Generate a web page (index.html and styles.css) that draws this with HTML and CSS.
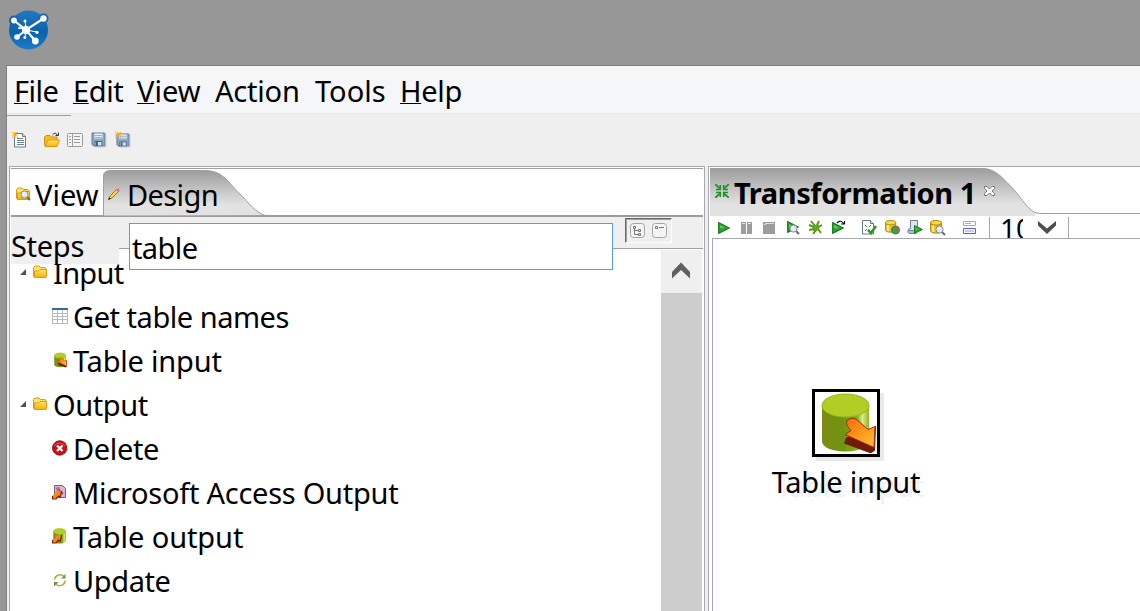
FILE: index.html
```html
<!DOCTYPE html>
<html lang="en">
<head>
<meta charset="utf-8">
<title>Transformation 1</title>
<link rel="stylesheet" href="styles.css">
</head>
<body>
<svg class="defs" aria-hidden="true">
  <defs>
    <linearGradient id="tab" x1="0" y1="0" x2="0" y2="1"><stop offset="0" stop-color="#9c9c9c"/><stop offset=".5" stop-color="#cccccc"/><stop offset=".75" stop-color="#e2e2e2"/><stop offset="1" stop-color="#e2e2e2"/></linearGradient>
    <linearGradient id="gold" x1="0" y1="0" x2="0" y2="1"><stop offset="0" stop-color="#ffe36b"/><stop offset="1" stop-color="#f8ae0c"/></linearGradient>
    <linearGradient id="blue" x1="0" y1="0" x2="0" y2="1"><stop offset="0" stop-color="#2478bf"/><stop offset=".55" stop-color="#0862ae"/><stop offset="1" stop-color="#1c7ccb"/></linearGradient>
    <linearGradient id="green" x1="0" y1="0" x2="1" y2="0"><stop offset="0" stop-color="#7d8b14"/><stop offset=".45" stop-color="#6f9510"/><stop offset=".75" stop-color="#86ad18"/><stop offset=".86" stop-color="#d8ec8c"/><stop offset="1" stop-color="#8fb51d"/></linearGradient>
    <linearGradient id="orange" x1="0" y1="0" x2="1" y2="1"><stop offset="0" stop-color="#f46a0a"/><stop offset=".55" stop-color="#ff9a1c"/><stop offset="1" stop-color="#ffc24a"/></linearGradient>
    <symbol id="folder" viewBox="0 0 16 14"><path d="M1.500 11V2.500L3 1h4l1.500 1.500H13L14 4v8.500H2.500z" fill="#ffe36b" stroke="#d59a1c"/><path d="M2.500 12.500V6h4L8 4.500h6.500v7l-1 1z" fill="url(#gold)" stroke="#e09c10"/></symbol>
    <symbol id="play" viewBox="0 0 12 12"><path d="M.7.7v10.600L11.300 6z" fill="#2da52d" stroke="#137a1b" stroke-width="1.200"/><path d="M2 3v3h5z" fill="#65c95f"/></symbol>
    <symbol id="floppy" viewBox="0 0 16 16"><path d="M1 1h12.500l.5.500V14H2.500L1 12.500z" fill="#8ba7c0" stroke="#607b94"/><path d="M3.500 1.500h8v5h-8z" fill="#e4edf4"/><path d="M4 3.500h7M4 5.500h7" stroke="#9db2c4"/><path d="M4 9.500h7V14H4z" fill="#d8e0e8" stroke="#4f6577"/><path d="M5 10h2v4H5z" fill="#4d6375"/><path d="M15 3v12H4" fill="none" stroke="#bfd2e4"/></symbol>
    <symbol id="spark" viewBox="0 0 7 7"><path d="M2 2h3v3H2z" fill="#ffae00"/><path d="M0 0h1.500v1.500H0zM2.800 0h1.400v2H2.800zM5.500 0H7v1.500H5.500zM0 2.800h2v1.400H0zM5 2.800h2v1.400H5zM0 5.500h1.500V7H0zM2.800 5h1.400v2H2.800zM5.500 5.500H7V7H5.500z" fill="#f8b21c"/></symbol>
    <symbol id="lens" viewBox="0 0 11 11"><path d="M7 7l3 3" stroke="#6a6a6a" stroke-width="2"/><circle cx="4.500" cy="4.500" r="3.600" fill="#dcebf7" stroke="#888"/><path d="M2.800 4.500q0-1.500 1.700-1.700" fill="none" stroke="#fff"/></symbol>
    <symbol id="doc" viewBox="0 0 13 15"><path d="M.5.5h8l3 3v10.500H.5z" fill="#fff" stroke="#647c91"/><path d="M8.500.5v3h3" fill="#d8e2ea" stroke="#647c91"/></symbol>
    <symbol id="db" viewBox="0 0 14 15"><path d="M.5 3v8.500c0 3.500 12 3.500 12 0V3" fill="#e9c52b" stroke="#a87c0a"/><path d="M3.500 5v8" stroke="#fff08b" stroke-width="2"/><ellipse cx="6.500" cy="3" rx="6" ry="2.500" fill="#f5dc3d" stroke="#a87c0a"/></symbol>
    <symbol id="dbgreen" viewBox="0 0 60 60"><path d="M5 12v36c0 14 47 14 47 0V12" fill="url(#green)"/><ellipse cx="28.500" cy="12.500" rx="23.500" ry="11.500" fill="#b2cd24" stroke="#98b619"/></symbol>
    <symbol id="arrow" viewBox="0 0 32 36"><path d="M2 20L0 26l27 10 4-3 1-25-7 7z" fill="#721a09"/><path d="M3 3q6-5 12 1l9 8 7-3-1 21L1 17l6-4-4-5q-1-3 0-5z" fill="url(#orange)" stroke="#a32909"/></symbol>
  </defs>
</svg>

<header class="titlebar">
  <svg class="logo" width="42" height="42" viewBox="0 0 42 42"><circle cx="21.500" cy="21" r="19.500" fill="url(#blue)"/><circle cx="7" cy="11.500" r="5" fill="#1266ad"/><circle cx="36.500" cy="9.500" r="5" fill="#1266ad"/><path d="M7 11.500L19 21 36.500 9.500M19 21l9 10.500M19 21l-9 7" stroke="#fff" stroke-width="2.200" fill="none"/><path d="M19 21l-.8-9.300M19 21l11 2M19 21l-1 7M19 21l-6-2" stroke="#fff" fill="none"/><g fill="#fff"><circle cx="7" cy="11.500" r="2.900"/><circle cx="36.500" cy="9.500" r="3.200"/><circle cx="28.300" cy="32" r="3.400"/><circle cx="10" cy="28" r="2.800"/><circle cx="19" cy="21" r="4.200"/><circle cx="18" cy="12" r="1.500"/><circle cx="30" cy="23.300" r="1.600"/><circle cx="17.800" cy="28.500" r="1.500"/><circle cx="12.500" cy="19" r="1.300"/></g></svg>
</header>

<main class="window">
  <nav class="menu"><span class="m1"><u>F</u>ile</span><span class="m2"><u>E</u>dit</span><span class="m3"><u>V</u>iew</span><span class="m4">Action</span><span class="m5">Tools</span><span class="m6"><u>H</u>elp</span></nav>
  <div class="toolbar">
    <svg width="16" height="16" viewBox="0 0 16 16"><use href="#doc" x="2" y="1" width="13" height="15"/><path d="M5 6.500h6M5 8.500h7M5 10.500h7M5 12.500h7" stroke="#6c8296"/><use href="#spark" width="6" height="6"/></svg>
    <svg class="gap" width="18" height="16" viewBox="0 0 18 16"><path d="M1.500 13V5L3 3.500h4L8.500 5H14v9H2.500z" fill="#f5bd23" stroke="#cc9012"/><path d="M2 14.500L5 8h11.500L14 14.500z" fill="url(#gold)" stroke="#dc9a13"/><path d="M9.500 3q3-4 5.500 1M12.500 3.500h3v-3" fill="none" stroke="#333"/></svg>
    <svg width="16" height="16" viewBox="0 0 16 16"><rect x=".5" y="1.500" width="15" height="13" rx="1" fill="#f4f4f4" stroke="#9b9b9b"/><path d="M5.500 2v12M2 4.500h2M2 7.500h2M2 10.500h2M7 4.500h6M7 7.500h6M7 10.500h6" stroke="#9b9b9b"/></svg>
    <svg width="16" height="16"><use href="#floppy" width="16" height="16"/></svg>
    <svg width="16" height="16" viewBox="0 0 16 16"><use href="#floppy" x="1" y="1" width="15" height="15"/><use href="#spark" width="6" height="6"/></svg>
  </div>

  <div class="panels">
    <section class="left">
      <div class="tabs">
        <svg class="tabshape" width="692" height="49" viewBox="0 0 692 49"><path d="M92.500 48V8q0-5 6-5.500h96c17 0 23 12 32 21 13 13 18 21 28 24z" fill="url(#tab)" stroke="#a0a0a0"/><path d="M0 47.500h92M253 47.500h439" stroke="#9c9c9c" stroke-width="1"/><path d="M0 48.500h692" stroke="#9c9c9c" stroke-width="1"/></svg>
        <div class="tab view"><svg width="16" height="14" viewBox="0 0 16 14"><use href="#folder" width="16" height="14"/><use href="#lens" x="5" y="3" width="11" height="11"/></svg><span>View</span></div>
        <div class="tab design"><svg width="13" height="13" viewBox="0 0 13 13"><path d="M2 9l7-7 2 2-7 7-3 1z" fill="#ffd246" stroke="#ad7415"/><path d="M8 3l2-2 2 2-2 2z" fill="#d97983"/><path d="M0 13l1-3 2 2z" fill="#333"/></svg><span>Design</span></div>
      </div>
      <div class="body">
        <div class="filter">
          <span class="steps">Steps</span>
          <input class="search" type="text" value="table">
          <div class="toggles">
            <svg width="15" height="15" viewBox="0 0 15 15"><rect x=".5" y=".5" width="14" height="14" rx="3" fill="#f5f5f5" stroke="#a3a3a3"/><path d="M4.500 5v6.500H8M4.500 7.500H8" fill="none" stroke="#777"/><path d="M3.500 3.500h2v2h-2zM8.500 6.500h2v2h-2zM8.500 10.500h2v2h-2z" fill="#eee" stroke="#777"/></svg>
            <svg width="15" height="15" viewBox="0 0 15 15"><rect x=".5" y=".5" width="14" height="14" rx="3" fill="#f5f5f5" stroke="#a3a3a3"/><path d="M3.500 3.500h2v2h-2zM7 4.500h5" fill="none" stroke="#777"/></svg>
          </div>
        </div>
        <div class="treewrap">
          <ul class="tree">
            <li class="group"><i class="tri"></i><svg width="16" height="14"><use href="#folder" width="16" height="14"/></svg><span class="t-input">Input</span></li>
            <li class="leaf"><svg width="16" height="17" viewBox="0 0 16 17"><path d="M0 1h16v15H0z" fill="#fff"/><path d="M.5 2v14M5.500 2v14M10.500 2v14M15.500 2v14M0 5.500h16M0 8.500h16M0 11.500h16M0 15.500h16" stroke="#b4bac4"/><path d="M0 1h16" stroke="#3a62b4" stroke-width="2"/></svg><span class="t-get">Get table names</span></li>
            <li class="leaf"><svg width="16" height="17" viewBox="0 0 16 17"><use href="#dbgreen" x="1" y="0" width="15" height="16"/><use href="#arrow" x="6" y="5" width="9" height="11"/></svg><span class="t-tin">Table input</span></li>
            <li class="group"><i class="tri"></i><svg width="16" height="14"><use href="#folder" width="16" height="14"/></svg><span class="t-out">Output</span></li>
            <li class="leaf"><svg width="16" height="17" viewBox="0 0 16 17"><circle cx="7.700" cy="8" r="7.200" fill="#c90f17" stroke="#94141a"/><path d="M2 6q5-6 11.500 0" fill="none" stroke="#e05b5e"/><path d="M5 5.500l5.500 5.500M10.500 5.500L5 11" stroke="#fff" stroke-width="2.200"/></svg><span class="t-del">Delete</span></li>
            <li class="leaf"><svg width="16" height="17" viewBox="0 0 16 17"><path d="M2.500 1.500h8l3 3v9h-11z" fill="#d8b8c4" stroke="#77626d"/><circle cx="6" cy="5" r="2" fill="#b16a86"/><path d="M7 6l4 4" stroke="#9b4e71" stroke-width="2"/><path d="M.5 11.500L4 9.500 3 7.500l6.500-.5-1.500 6-2-1.500-2 3-3.500.5z" fill="#f8871b"/><path d="M.5 12v3h3.500l2.500-3 1.700 1.200L9.700 7" fill="none" stroke="#812109" stroke-width="1.200"/></svg><span class="t-ms">Microsoft Access Output</span></li>
            <li class="leaf"><svg width="16" height="17" viewBox="0 0 16 17"><use href="#dbgreen" x="0" y="0" width="16" height="16"/><path d="M.5 11.500L4 9.500 3 7.500l6.500-.5-1.500 6-2-1.500-2 3-3.500.5z" fill="#f8871b"/><path d="M.5 12v3h3.500l2.500-3 1.700 1.200L9.700 7" fill="none" stroke="#812109" stroke-width="1.200"/></svg><span class="t-tout">Table output</span></li>
            <li class="leaf"><svg width="16" height="17" viewBox="0 0 16 17"><path d="M2.500 7.500a5.500 5 0 0 1 9.500-3M13 8.500a5.500 5 0 0 1-9 4" fill="none" stroke="#9fb83c" stroke-width="1.500"/><path d="M13.500 2v4.500H9zM2 14.500V10h4.500z" fill="#7e8c3c"/></svg><span class="t-up">Update</span></li>
          </ul>
          <div class="scroll"><div class="up"><svg width="18" height="17" viewBox="0 0 18 17"><path d="M0 10L9 .5l9 9.500v6.500L9 8 0 16.500z" fill="#606060"/></svg></div></div>
        </div>
      </div>
    </section>

    <section class="right">
      <div class="tabs">
        <svg class="tabshape" width="432" height="49" viewBox="0 0 432 49"><path d="M0 48V.5h273c12 0 19 9 28 18 13 13 16 24 27 27V48z" fill="url(#tab)"/><path d="M0 .5h273c12 0 19 9 27 17 14 14 18 28 31 28h101" fill="none" stroke="#a0a0a0"/><path d="M325 46h107v3H325z" fill="#fff"/></svg>
        <div class="tab trans"><svg width="14" height="14" viewBox="0 0 14 14"><path d="M0 0l5 4.500M14 0L9 4.500M0 14l5-4.500M14 14L9 9.500" stroke="#249024" stroke-width="1.700"/><path d="M5.300 1v4.500H1M8.700 1v4.500H13M5.300 13V8.500H1M8.700 13V8.500H13" fill="none" stroke="#249024" stroke-width="1.600"/></svg><span>Transformation 1</span><svg class="close" width="11" height="10" viewBox="0 0 11 10"><path d="M.5.5h2.500L5.500 3 8 .5h2.500v2L8 5l2.500 2.500v2H8L5.500 7 3 9.500H.5v-2L3 5 .5 2.500z" fill="#fff" stroke="#777"/></svg></div>
      </div>
      <div class="actions">
        <svg class="a1" width="12" height="12"><use href="#play" width="12" height="12"/></svg>
        <svg class="a2" width="11" height="12" viewBox="0 0 11 12"><path d="M0 0h5v12H0zM6 0h5v12H6z" fill="#9d9d9d"/><path d="M1 1.500h3M7 1.500h3" stroke="#e6e6e6"/></svg>
        <svg class="a3" width="12" height="12" viewBox="0 0 12 12"><path d="M0 0h12v12H0z" fill="#9d9d9d"/><path d="M1 2.500h1.500v-1H11" fill="none" stroke="#ddd"/></svg>
        <svg class="a4" width="14" height="15" viewBox="0 0 14 15"><use href="#play" x="0" y="1" width="12" height="12"/><use href="#lens" x="2" y="4" width="11" height="11"/></svg>
        <svg class="a5" width="15" height="15" viewBox="0 0 15 15"><ellipse cx="8" cy="8" rx="3" ry="4" transform="rotate(45 8 8)" fill="#67a91e"/><path d="M7 6L3 1M9 5l2-4M6 7L1 5M6 9l-5 1M8 10l-3 4M10 9l3 4M10 7l4-2" fill="none" stroke="#529916" stroke-width="1.900"/></svg>
        <svg class="a6" width="14" height="15" viewBox="0 0 14 15"><use href="#play" y="2" width="12" height="12"/><path d="M5 3q4-4 7 1M9 4h3.500V1" fill="none" stroke="#111" stroke-width="1.200"/></svg>
        <svg class="a7" width="15" height="15" viewBox="0 0 15 15"><use href="#doc" width="13" height="15"/><path d="M3 5l2 2M9 5L7 7M3 11l2-2" stroke="#27942c"/><path d="M6 10l3 3 5-7" fill="none" stroke="#2c972c" stroke-width="2.500"/></svg>
        <svg class="a8" width="15" height="15" viewBox="0 0 15 15"><use href="#db" width="12" height="13"/><circle cx="10.500" cy="10" r="4" fill="#3da34a" stroke="#45764d"/><path d="M10.500 10V6.500a3.500 3.500 0 0 1 3.500 3.500z" fill="#e44848"/></svg>
        <svg class="a9" width="16" height="15" viewBox="0 0 16 15"><path d="M3.500.5h7v10h-9q-1-2 2-2z" fill="#dce5ee" stroke="#6c8297"/><path d="M1 10.500h8v3H2q-2-1-1-3z" fill="#adbfd0" stroke="#6c8297"/><use href="#play" x="7" y="4" width="9" height="11"/></svg>
        <svg class="a10" width="17" height="16" viewBox="0 0 17 16"><use href="#db" width="13" height="14"/><use href="#lens" x="5" y="5" width="11" height="11"/></svg>
        <svg class="a11" width="13" height="13" viewBox="0 0 13 13"><path d="M.5.5h12v4H.5z" fill="#fff" stroke="#a9a9a9"/><path d="M2 2.500h6" stroke="#e8af39"/><path d="M.5 7.500h12v5H.5z" fill="#fff" stroke="#5660dd"/><path d="M2 10h9" stroke="#8b92e8"/></svg>
        <div class="zoom"><span>10</span><svg width="18" height="14" viewBox="0 0 18 14"><path d="M0 0l9 7.500L18 0v4.500l-9 8.500-9-8.500z" fill="#4d4d4d"/></svg></div>
      </div>
      <div class="canvas">
        <div class="node"><div class="box"><svg width="60" height="60" viewBox="0 0 60 60"><use href="#dbgreen" x="1" width="60" height="60"/><use href="#arrow" x="28" y="24" width="32" height="37"/></svg></div><span>Table input</span></div>
      </div>
    </section>
  </div>
</main>
</body>
</html>
```
FILE: styles.css
```css
* { box-sizing: border-box; }
body { margin: 0; width: 1140px; height: 611px; overflow: hidden; display: flex; flex-direction: column; background: #979797; color: #000; font: 29px/44px "Noto Sans", sans-serif; }
svg { display: block; flex: none; }
span { white-space: nowrap; }
.defs { position: absolute; width: 0; height: 0; }
.titlebar { height: 65px; padding: 9px 0 0 7px; flex: none; }
.window { flex: 1; min-height: 0; margin-left: 6px; border: solid #808080; border-width: 1px 0 0 1px; background: #efefef; display: flex; flex-direction: column; }
.menu { height: 48px; flex: none; background: #f5f6f8; border-bottom: 1px solid #e8e8ea; display: flex; padding: 3px 0 0 7px; }
.menu u { text-decoration-thickness: 1px; text-underline-offset: 1px; }
.menu span { flex: none; }
.m1 { width: 59px; letter-spacing: -.5px; }
.m2 { width: 64px; letter-spacing: -.4px; }
.m3 { width: 78px; }
.m4 { width: 100px; letter-spacing: -.2px; }
.m5 { width: 85px; }
.m6 { letter-spacing: -.3px; }
.toolbar { height: 52px; flex: none; display: flex; gap: 8px; padding: 18px 0 0 5px; background: linear-gradient(#a0a0a0, #a0a0a0) 0 1px / 64px 1px no-repeat; }
.toolbar .gap { margin: 0 -2px 0 7px; }
.panels { flex: 1; min-height: 0; display: flex; gap: 3px; padding-left: 2px; }
.left { width: 696px; flex: none; border: solid #a7a8b0; border-width: 1px 1px 0; padding: 1px 1px 0; background: #fff; display: flex; flex-direction: column; }
.right { flex: 1; min-width: 0; border: solid #a7a8b0; border-width: 1px 0 0 1px; padding: 1px 0 0 1px; background: #fff; display: flex; flex-direction: column; }
.tabs { height: 49px; flex: none; display: flex; position: relative; }
.left .tabs { border-top: 1px solid #a0a0a0; }
.tabshape { position: absolute; left: 0; top: 0; }
.left .tabshape { top: -1px; }
.tab { position: relative; display: flex; }
.view { padding: 4px 0 0 4px; gap: 4px; width: 96px; }
.view svg { margin-top: 14px; }
.design { padding: 4px 0 0 1px; gap: 6px; letter-spacing: -.6px; }
.design svg { margin-top: 14px; }
.body { flex: 1; min-height: 0; display: flex; flex-direction: column; background: #fff; }
.filter { position: relative; z-index: 1; height: 32px; flex: none; display: flex; background: #efefef; border-bottom: 1px solid #a0a0a0; }
.steps { width: 108px; height: 47px; line-height: 57px; letter-spacing: -.3px; background: #efefef; overflow: hidden; }
.search { width: 484px; height: 47px; margin: 6px 0 0 10px; padding: 2px 2px 0; border: 1px solid #569de5; background: #fff; font: inherit; line-height: 42px; letter-spacing: -.6px; flex: none; outline: 0; border-radius: 0; }
.toggles { margin: 1px 0 0 12px; width: 47px; height: 25px; display: flex; gap: 7px; padding: 4px; border: 1px solid; border-color: #696969 #fff #fff #696969; box-shadow: inset 1px 1px #a0a0a0; }
.treewrap { flex: 1; min-height: 0; display: flex; overflow: hidden; }
.tree { width: 650px; margin: 0; padding: 2px 0 0; list-style: none; }
.tree li { display: flex; height: 44px; }
.tree li span { flex: none; }
.group { padding-left: 9px; }
.group svg { margin: 14px 5px 0 6px; }
.tri { width: 6px; height: 6px; margin-top: 18px; background: #505050; clip-path: polygon(100% 0, 100% 100%, 0 100%); }
.leaf { padding-left: 41px; gap: 5px; }
.leaf svg { margin-top: 13px; }
.t-input { letter-spacing: -.7px; }
.t-get { letter-spacing: -.47px; }
.t-tin { letter-spacing: -.2px; }
.t-out { letter-spacing: -.4px; }
.t-del { letter-spacing: -.35px; }
.t-ms { letter-spacing: -.26px; }
.t-tout { letter-spacing: -.1px; }
.t-up { letter-spacing: -.4px; }
.scroll { width: 41px; margin-top: 1px; background: #cdcdcd; }
.up { height: 43px; padding: 12px 0 0 11px; background: #efefef; }
.trans { padding: 3px 0 0 5px; font-weight: bold; letter-spacing: -.42px; }
.trans > svg { margin-top: 13px; }
.trans span { margin-left: 5px; width: 240px; }
.trans .close { margin: 15px 0 0 10px; }
.actions { height: 21px; flex: none; display: flex; align-items: center; padding-left: 8px; }
.a2 { margin-left: 11px; }
.a3 { margin-left: 11px; }
.a4 { margin-left: 12px; }
.a5 { margin-left: 7px; }
.a6 { margin-left: 9px; }
.a7 { margin-left: 16px; }
.a8 { margin-left: 8px; }
.a9 { margin-left: 7px; }
.a10 { margin-left: 7px; }
.a11 { margin-left: 16px; }
.zoom { width: 80px; height: 21px; margin-left: 13px; border: solid #a9a9b0; border-width: 0 1px; display: flex; padding-left: 10px; overflow: hidden; }
.zoom span { width: 23px; overflow: hidden; line-height: 22px; flex: none; font-size: 28px; }
.zoom svg { margin: 4px 0 0 15px; }
.canvas { flex: 1; margin-left: 2px; border: solid #a7a8b0; border-width: 1px 0 0 1px; position: relative; }
.node { position: absolute; left: 58px; top: 150px; width: 150px; display: flex; flex-direction: column; align-items: center; }
.box { width: 68px; height: 68px; padding: 1px; border: 3px solid #000; box-shadow: 4px 4px #eaeaea; }
.node span { margin-top: 3px; letter-spacing: -.2px; text-shadow: 4px 4px #f1f1f1; }
```
